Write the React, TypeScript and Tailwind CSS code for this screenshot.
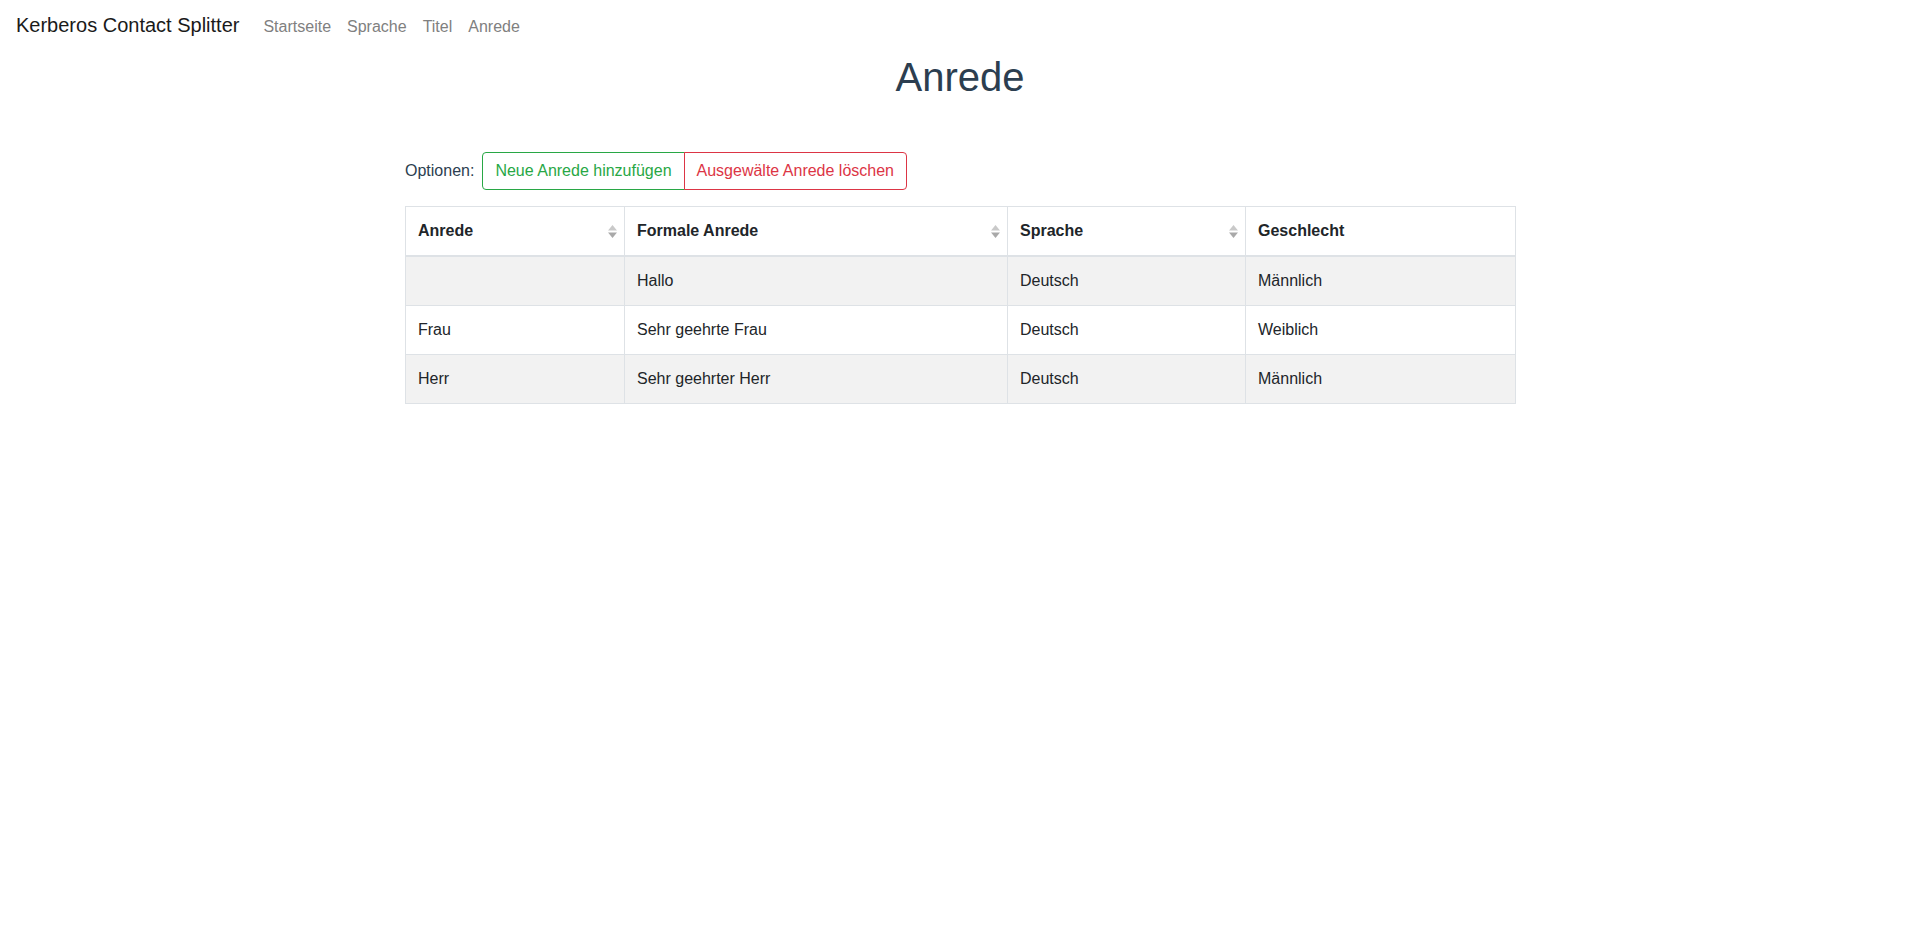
import React from "react";

const rows = [
  { anrede: "", formal: "Hallo", sprache: "Deutsch", geschlecht: "Männlich" },
  { anrede: "Frau", formal: "Sehr geehrte Frau", sprache: "Deutsch", geschlecht: "Weiblich" },
  { anrede: "Herr", formal: "Sehr geehrter Herr", sprache: "Deutsch", geschlecht: "Männlich" },
];

function SortIcon() {
  return (
    <svg width="9" height="13" viewBox="0 0 9 13" className="-mr-[5px] shrink-0">
      <path d="M0 5.5 L4.5 0 L9 5.5 Z" fill="#c9c9c9" />
      <path d="M0 7.5 L4.5 13 L9 7.5 Z" fill="#a9a9a9" />
    </svg>
  );
}

function HeadCell({ label, sortable = true }: { label: string; sortable?: boolean }) {
  return (
    <th className="border border-[#dee2e6] border-b-2 px-3 py-3 text-left font-bold">
      <div className="flex items-center justify-between">
        <span>{label}</span>
        {sortable && <SortIcon />}
      </div>
    </th>
  );
}

export default function App() {
  return (
    <div className="min-h-screen bg-white font-['Liberation_Sans',Arial,sans-serif] text-[16px] text-[#212529]">
      <nav className="flex h-[49px] items-baseline px-4 pt-[10px]">
        <span className="mr-4 text-[20px] leading-[30px] text-[#1a1a1a]">Kerberos Contact Splitter</span>
        <div className="flex">
          {["Startseite", "Sprache", "Titel", "Anrede"].map((l) => (
            <a key={l} className="px-2 leading-6 text-[#808080]">
              {l}
            </a>
          ))}
        </div>
      </nav>

      <h1 className="mt-[4px] text-center text-[40px] leading-[48px] text-[#2c3e50]">Anrede</h1>

      <div className="mx-auto mt-[51px] w-[1110px]">
        <div className="flex items-center">
          <span className="mr-2 text-[#2c3e50]">Optionen:</span>
          <div className="flex">
            <button className="h-[38px] rounded-l-[4px] border border-[#28a745] px-3 text-[#28a745]">
              Neue Anrede hinzufügen
            </button>
            <button className="-ml-px h-[38px] rounded-r-[4px] border border-[#dc3545] px-3 text-[#dc3545]">
              Ausgewälte Anrede löschen
            </button>
          </div>
        </div>

        <table className="mt-4 w-full table-fixed border-collapse leading-6">
          <colgroup>
            <col className="w-[219px]" />
            <col className="w-[383px]" />
            <col className="w-[238px]" />
            <col className="w-[270px]" />
          </colgroup>
          <thead>
            <tr>
              <HeadCell label="Anrede" />
              <HeadCell label="Formale Anrede" />
              <HeadCell label="Sprache" />
              <HeadCell label="Geschlecht" sortable={false} />
            </tr>
          </thead>
          <tbody>
            {rows.map((r, i) => (
              <tr key={i} className={i % 2 === 0 ? "bg-[#f2f2f2]" : "bg-white"}>
                <td className="border border-[#dee2e6] px-3 py-3">{r.anrede}</td>
                <td className="border border-[#dee2e6] px-3 py-3">{r.formal}</td>
                <td className="border border-[#dee2e6] px-3 py-3">{r.sprache}</td>
                <td className="border border-[#dee2e6] px-3 py-3">{r.geschlecht}</td>
              </tr>
            ))}
          </tbody>
        </table>
      </div>
    </div>
  );
}
